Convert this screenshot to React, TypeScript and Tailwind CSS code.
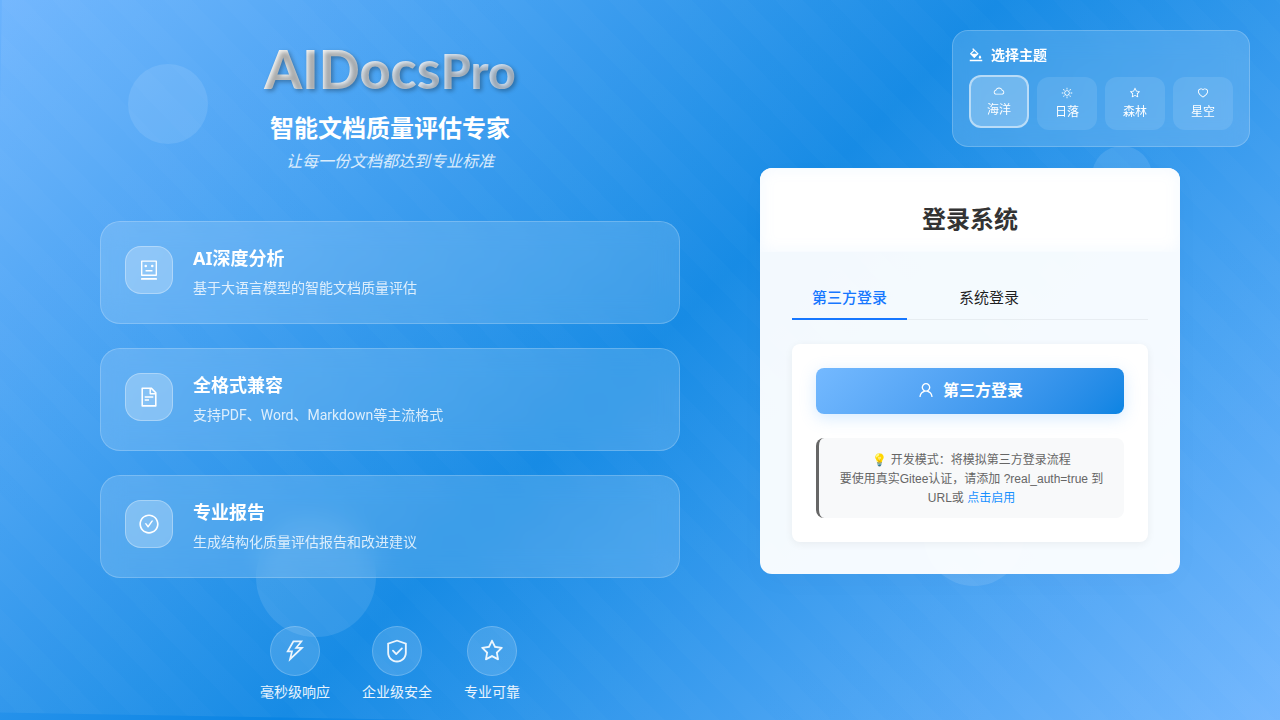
import { useState } from "react";
import type { IconType } from "react-icons";
import {
  AiOutlineCheckCircle,
  AiOutlineCloud,
  AiOutlineFileText,
  AiOutlineHeart,
  AiOutlineRobot,
  AiOutlineSafety,
  AiOutlineStar,
  AiOutlineSun,
  AiOutlineThunderbolt,
  AiOutlineUser,
} from "react-icons/ai";

type Feature = { icon: IconType; title: string; text: string };

const features: Feature[] = [
  { icon: AiOutlineRobot, title: "AI深度分析", text: "基于大语言模型的智能文档质量评估" },
  { icon: AiOutlineFileText, title: "全格式兼容", text: "支持PDF、Word、Markdown等主流格式" },
  { icon: AiOutlineCheckCircle, title: "专业报告", text: "生成结构化质量评估报告和改进建议" },
];

const strengths: { icon: IconType; label: string }[] = [
  { icon: AiOutlineThunderbolt, label: "毫秒级响应" },
  { icon: AiOutlineSafety, label: "企业级安全" },
  { icon: AiOutlineStar, label: "专业可靠" },
];

const themes: { icon: IconType; name: string }[] = [
  { icon: AiOutlineCloud, name: "海洋" },
  { icon: AiOutlineSun, name: "日落" },
  { icon: AiOutlineStar, name: "森林" },
  { icon: AiOutlineHeart, name: "星空" },
];

const tabs = ["第三方登录", "系统登录"];

function PaintBucket() {
  return (
    <svg aria-hidden="true" viewBox="64 64 896 896" fill="currentColor" className="size-3.5">
      <path d="M766.4 744.3c43.7 0 79.4-36.2 79.4-80.5 0-53.5-79.4-140.8-79.4-140.8S687 610.3 687 663.8c0 44.3 35.7 80.5 79.4 80.5zm-377.1-44.1c7.1 7.1 18.6 7.1 25.6 0l256.1-256c7.1-7.1 7.1-18.6 0-25.6l-256-256c-.6-.6-1.3-1.2-2-1.7l-78.2-78.2a9.11 9.11 0 0 0-12.8 0l-48 48a9.11 9.11 0 0 0 0 12.8l67.2 67.2-207.8 207.9c-7.1 7.1-7.1 18.6 0 25.6l255.9 256zm12.9-448.6l178.9 178.9H223.4l178.8-178.9zM904 816H120c-4.4 0-8 3.6-8 8v80c0 4.4 3.6 8 8 8h784c4.4 0 8-3.6 8-8v-80c0-4.4-3.6-8-8-8z" />
    </svg>
  );
}

function Backdrop() {
  return (
    <div aria-hidden="true" className="pointer-events-none absolute inset-0 overflow-hidden">
      <div className="absolute -top-10 -right-10 bottom-0 -left-1 translate-y-1 rotate-1 bg-[repeating-linear-gradient(45deg,rgba(255,255,255,0.06)_0px,rgba(255,255,255,0.06)_20px,rgba(255,255,255,0.072)_20px,rgba(255,255,255,0.072)_40px)]" />
      <div className="absolute top-16 left-[10%] size-20 rounded-full bg-white/10" />
      <div className="absolute top-[146px] right-[10%] size-15 rounded-full bg-white/10" />
      <div className="absolute top-[517px] left-[20%] size-30 rounded-full bg-white/10" />
      <div className="absolute top-[486px] right-[20%] size-25 rounded-full bg-white/10" />
    </div>
  );
}

function ThemePicker() {
  const [active, setActive] = useState("海洋");
  return (
    <section
      aria-label="选择主题"
      className="absolute top-[30px] right-[30px] z-10 rounded-2xl border border-white/20 bg-white/15 p-4 backdrop-blur-md"
    >
      <h2 className="mb-3.5 flex items-center gap-2 text-sm leading-4 font-bold">
        <PaintBucket />
        选择主题
      </h2>
      <div className="flex gap-2">
        {themes.map(({ icon: Icon, name }) => (
          <button
            key={name}
            type="button"
            aria-pressed={active === name}
            onClick={() => setActive(name)}
            className={
              active === name
                ? "flex w-15 -translate-y-0.5 flex-col items-center gap-1 rounded-xl border-2 border-white/50 bg-white/25 py-2 text-xs leading-[17px]"
                : "flex w-15 flex-col items-center gap-1 rounded-xl border-2 border-transparent bg-white/10 bg-clip-border py-2 text-xs leading-[17px]"
            }
          >
            <Icon className="size-3" />
            {name}
          </button>
        ))}
      </div>
    </section>
  );
}

function FeatureCard({ icon: Icon, title, text }: Feature) {
  return (
    <li className="flex items-start gap-5 rounded-[20px] border border-white/20 bg-white/15 p-6 backdrop-blur-md">
      <div className="flex size-12 shrink-0 items-center justify-center rounded-2xl border border-white/30 bg-white/25">
        <Icon className="size-[22px]" />
      </div>
      <div>
        <h3 className="text-lg leading-6 font-bold">{title}</h3>
        <p className="mt-2 font-['Roboto','Noto_Sans_CJK_SC',sans-serif] text-sm leading-[21px] text-white/80">
          {text}
        </p>
      </div>
    </li>
  );
}

function Intro() {
  return (
    <div className="min-w-0 flex-1">
      <header className="mb-12 text-center">
        <h1 className="bg-[linear-gradient(135deg,#fffaf2_0%,#fffaf2_20%,#b8daff_100%)] bg-clip-text font-['Lato',sans-serif] text-[54px] leading-[58px] font-black text-transparent [text-shadow:2px_2px_4px_rgba(0,0,0,0.3)]">
          AIDocs<span className="text-5xl leading-[1]">Pro</span>
        </h1>
        <p className="mt-3.5 text-2xl leading-8 font-bold">智能文档质量评估专家</p>
        <p className="mt-1.5 text-base leading-[23px] text-white/80 italic">让每一份文档都达到专业标准</p>
      </header>
      <ul className="flex flex-col gap-6">
        {features.map((feature) => (
          <FeatureCard key={feature.title} {...feature} />
        ))}
      </ul>
      <ul className="mt-12 flex justify-center gap-8">
        {strengths.map(({ icon: Icon, label }) => (
          <li key={label} className="flex flex-col items-center gap-2 pb-0.5 text-sm leading-4 text-white/90">
            <span className="flex size-[50px] items-center justify-center rounded-full border border-white/20 bg-white/15">
              <Icon className="size-[26px]" />
            </span>
            {label}
          </li>
        ))}
      </ul>
    </div>
  );
}

function LoginCard() {
  const [tab, setTab] = useState(tabs[0]);
  return (
    <section className="w-[420px] shrink-0 overflow-hidden rounded-xl bg-white/95 text-[#333] shadow-[0_8px_32px_rgba(0,0,0,0.02)]">
      <header className="bg-white px-8 pt-8 pb-3.5 text-center shadow-[inset_0_0_16px_rgba(116,185,255,0.1)]">
        <h2 className="text-2xl leading-[38px] font-bold">登录系统</h2>
      </header>
      <div className="px-8 pt-6 pb-8">
        <div role="tablist" className="flex gap-8 border-b border-black/5">
          {tabs.map((name) => (
            <button
              key={name}
              type="button"
              role="tab"
              aria-selected={tab === name}
              onClick={() => setTab(name)}
              className={
                tab === name
                  ? "-mb-px border-b-2 border-[#1677ff] px-5 py-[9px] text-[15px] leading-6 font-medium text-[#1677ff]"
                  : "-mb-px border-b-2 border-transparent px-5 py-[9px] text-[15px] leading-6 text-black/88"
              }
            >
              {name}
            </button>
          ))}
        </div>
        <div className="mt-6 rounded-lg bg-white p-6 shadow-[0_2px_8px_rgba(0,0,0,0.06)]">
          <button
            type="button"
            className="flex w-full items-center justify-center gap-2 rounded-lg bg-linear-135 from-[#74b9ff] to-[#0984e3] pt-2.5 pb-3 text-base leading-6 font-bold text-white shadow-[0_4px_16px_rgba(116,185,255,0.3)]"
          >
            <AiOutlineUser className="size-[18px]" />
            第三方登录
          </button>
          <p className="mt-6 rounded-lg border-l-3 border-[#666] bg-[#f8f9fa] px-4 pt-[13px] pb-2.5 text-center font-['Liberation_Sans','Noto_Sans_CJK_SC',sans-serif] text-xs leading-[19px] text-[#666]">
            💡 开发模式：将模拟第三方登录流程
            <br />
            要使用真实Gitee认证，请添加 ?real_auth=true 到
            <br />
            URL或{" "}
            <a href="?real_auth=true" className="text-[#1890ff]">
              点击启用
            </a>
          </p>
        </div>
      </div>
    </section>
  );
}

export default function App() {
  return (
    <div
      lang="zh-CN"
      className="relative min-h-screen overflow-hidden bg-[linear-gradient(135deg,#6bb3fe_0%,#0984e3_50%,#6bb3fe_100%)] font-['Noto_Sans','Noto_Sans_CJK_SC',sans-serif] text-white"
    >
      <Backdrop />
      <ThemePicker />
      <main className="relative flex items-center gap-20 px-[100px] pt-10 pb-4">
        <Intro />
        <LoginCard />
      </main>
    </div>
  );
}
